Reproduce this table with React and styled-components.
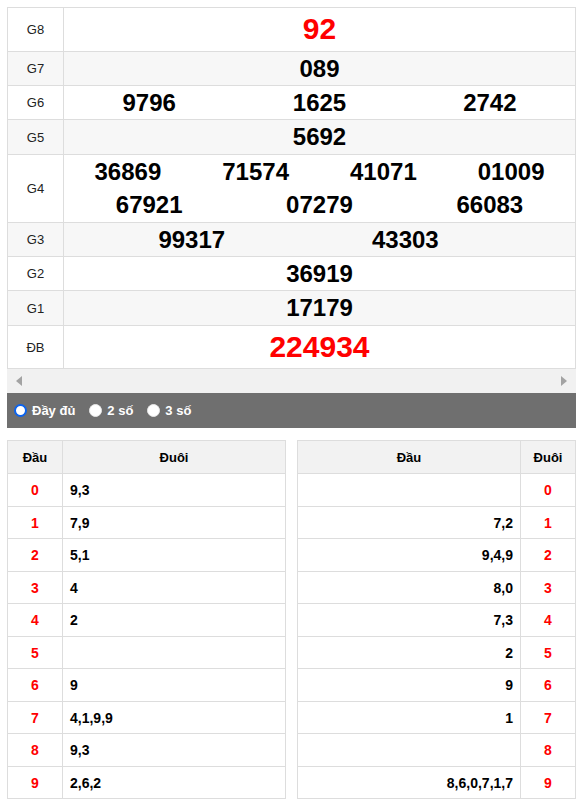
import React from "react";
import styled, { createGlobalStyle } from "styled-components";

const GlobalStyle = createGlobalStyle`
  body {
    margin: 0;
    background: #fff;
    font-family: "Liberation Sans", Arial, sans-serif;
    color: #000;
  }
`;

const Page = styled.div`
  width: 569px;
  margin: 7px 0 0 7px;
`;

const ResultTable = styled.div`
  border: 1px solid #ddd;
  border-bottom: none;
`;

const PrizeRow = styled.div`
  display: grid;
  grid-template-columns: 56px 1fr;
  border-bottom: 1px solid #ddd;
  background: ${(p) => (p.alt ? "#f7f7f7" : "#fff")};
`;

const Label = styled.div`
  border-right: 1px solid #ddd;
  display: flex;
  align-items: center;
  justify-content: center;
  font-size: 13px;
  color: #222;
`;

const Numbers = styled.div`
  display: grid;
  grid-template-columns: ${(p) => p.cols || "1fr"};
  text-align: center;
  font-weight: bold;
  font-size: ${(p) => (p.big ? "30px" : "24px")};
  line-height: ${(p) => (p.big ? "42.5px" : "33.4px")};
  color: ${(p) => (p.red ? "#ff0000" : "#000")};
`;

const Scroller = styled.div`
  height: 24px;
  background: #f1f1f1;
  display: flex;
  align-items: center;
  justify-content: space-between;
  padding: 0 9px 0 9px;
`;

const Arrow = styled.span`
  width: 0;
  height: 0;
  border-top: 5px solid transparent;
  border-bottom: 5px solid transparent;
  ${(p) =>
    p.right
      ? "border-left: 6px solid #a3a3a3;"
      : "border-right: 6px solid #a3a3a3;"}
`;

const FilterBar = styled.div`
  height: 35px;
  background: #6f6f6f;
  display: flex;
  align-items: center;
  padding-left: 7px;
  gap: 14px;
`;

const Option = styled.label`
  display: flex;
  align-items: center;
  gap: 5px;
  color: #fff;
  font-weight: bold;
  font-size: 13px;
`;

const Radio = styled.span`
  width: 13px;
  height: 13px;
  box-sizing: border-box;
  border-radius: 50%;
  background: #fff;
  border: ${(p) => (p.checked ? "2px solid #0b63ee" : "1px solid #e8e8e8")};
`;

const LotoWrap = styled.div`
  display: grid;
  grid-template-columns: 1fr 1fr;
  gap: 11px;
  margin-top: 12px;
`;

const LotoTable = styled.div`
  border: 1px solid #ddd;
  border-bottom: none;
`;

const LotoRow = styled.div`
  display: grid;
  grid-template-columns: ${(p) => (p.flip ? "1fr 55px" : "54px 1fr")};
  height: ${(p) => (p.head ? "32px" : "31.5px")};
  border-bottom: 1px solid #ddd;
  background: ${(p) => (p.head ? "#f2f2f2" : "#fff")};
  font-weight: bold;
  font-size: 14px;
`;

const Cell = styled.div`
  display: flex;
  align-items: center;
  justify-content: ${(p) => p.align || "center"};
  padding: 0 7px;
  color: ${(p) => (p.red ? "#ff0000" : "#000")};
  font-size: ${(p) => (p.head ? "13px" : "14px")};
  & + & {
    border-left: 1px solid #ddd;
  }
`;

const prizes = [
  { label: "G8", lines: [["92"]], big: true, red: true },
  { label: "G7", lines: [["089"]] },
  { label: "G6", lines: [["9796", "1625", "2742"]] },
  { label: "G5", lines: [["5692"]] },
  { label: "G4", lines: [["36869", "71574", "41071", "01009"], ["67921", "07279", "66083"]] },
  { label: "G3", lines: [["99317", "43303"]], cols: "50% 33.6%" },
  { label: "G2", lines: [["36919"]] },
  { label: "G1", lines: [["17179"]] },
  { label: "ĐB", lines: [["224934"]], big: true, red: true },
];

const dau = ["9,3", "7,9", "5,1", "4", "2", "", "9", "4,1,9,9", "9,3", "2,6,2"];
const duoi = ["", "7,2", "9,4,9", "8,0", "7,3", "2", "9", "1", "", "8,6,0,7,1,7"];

export default function App() {
  return (
    <Page>
      <GlobalStyle />
      <ResultTable>
        {prizes.map((p, i) => (
          <PrizeRow key={p.label} alt={i % 2 === 1}>
            <Label>{p.label}</Label>
            <div>
              {p.lines.map((line, j) => (
                <Numbers
                  key={j}
                  big={p.big}
                  red={p.red}
                  cols={p.cols || `repeat(${line.length}, 1fr)`}
                >
                  {line.map((n) => (
                    <span key={n}>{n}</span>
                  ))}
                </Numbers>
              ))}
            </div>
          </PrizeRow>
        ))}
      </ResultTable>
      <Scroller>
        <Arrow />
        <Arrow right />
      </Scroller>
      <FilterBar>
        <Option>
          <Radio checked />
          Đầy đủ
        </Option>
        <Option>
          <Radio />2 số
        </Option>
        <Option>
          <Radio />3 số
        </Option>
      </FilterBar>
      <LotoWrap>
        <LotoTable>
          <LotoRow head>
            <Cell head>Đầu</Cell>
            <Cell head>Đuôi</Cell>
          </LotoRow>
          {dau.map((v, i) => (
            <LotoRow key={i}>
              <Cell red>{i}</Cell>
              <Cell align="flex-start">{v}</Cell>
            </LotoRow>
          ))}
        </LotoTable>
        <LotoTable>
          <LotoRow head flip>
            <Cell head>Đầu</Cell>
            <Cell head>Đuôi</Cell>
          </LotoRow>
          {duoi.map((v, i) => (
            <LotoRow key={i} flip>
              <Cell align="flex-end">{v}</Cell>
              <Cell red>{i}</Cell>
            </LotoRow>
          ))}
        </LotoTable>
      </LotoWrap>
    </Page>
  );
}
